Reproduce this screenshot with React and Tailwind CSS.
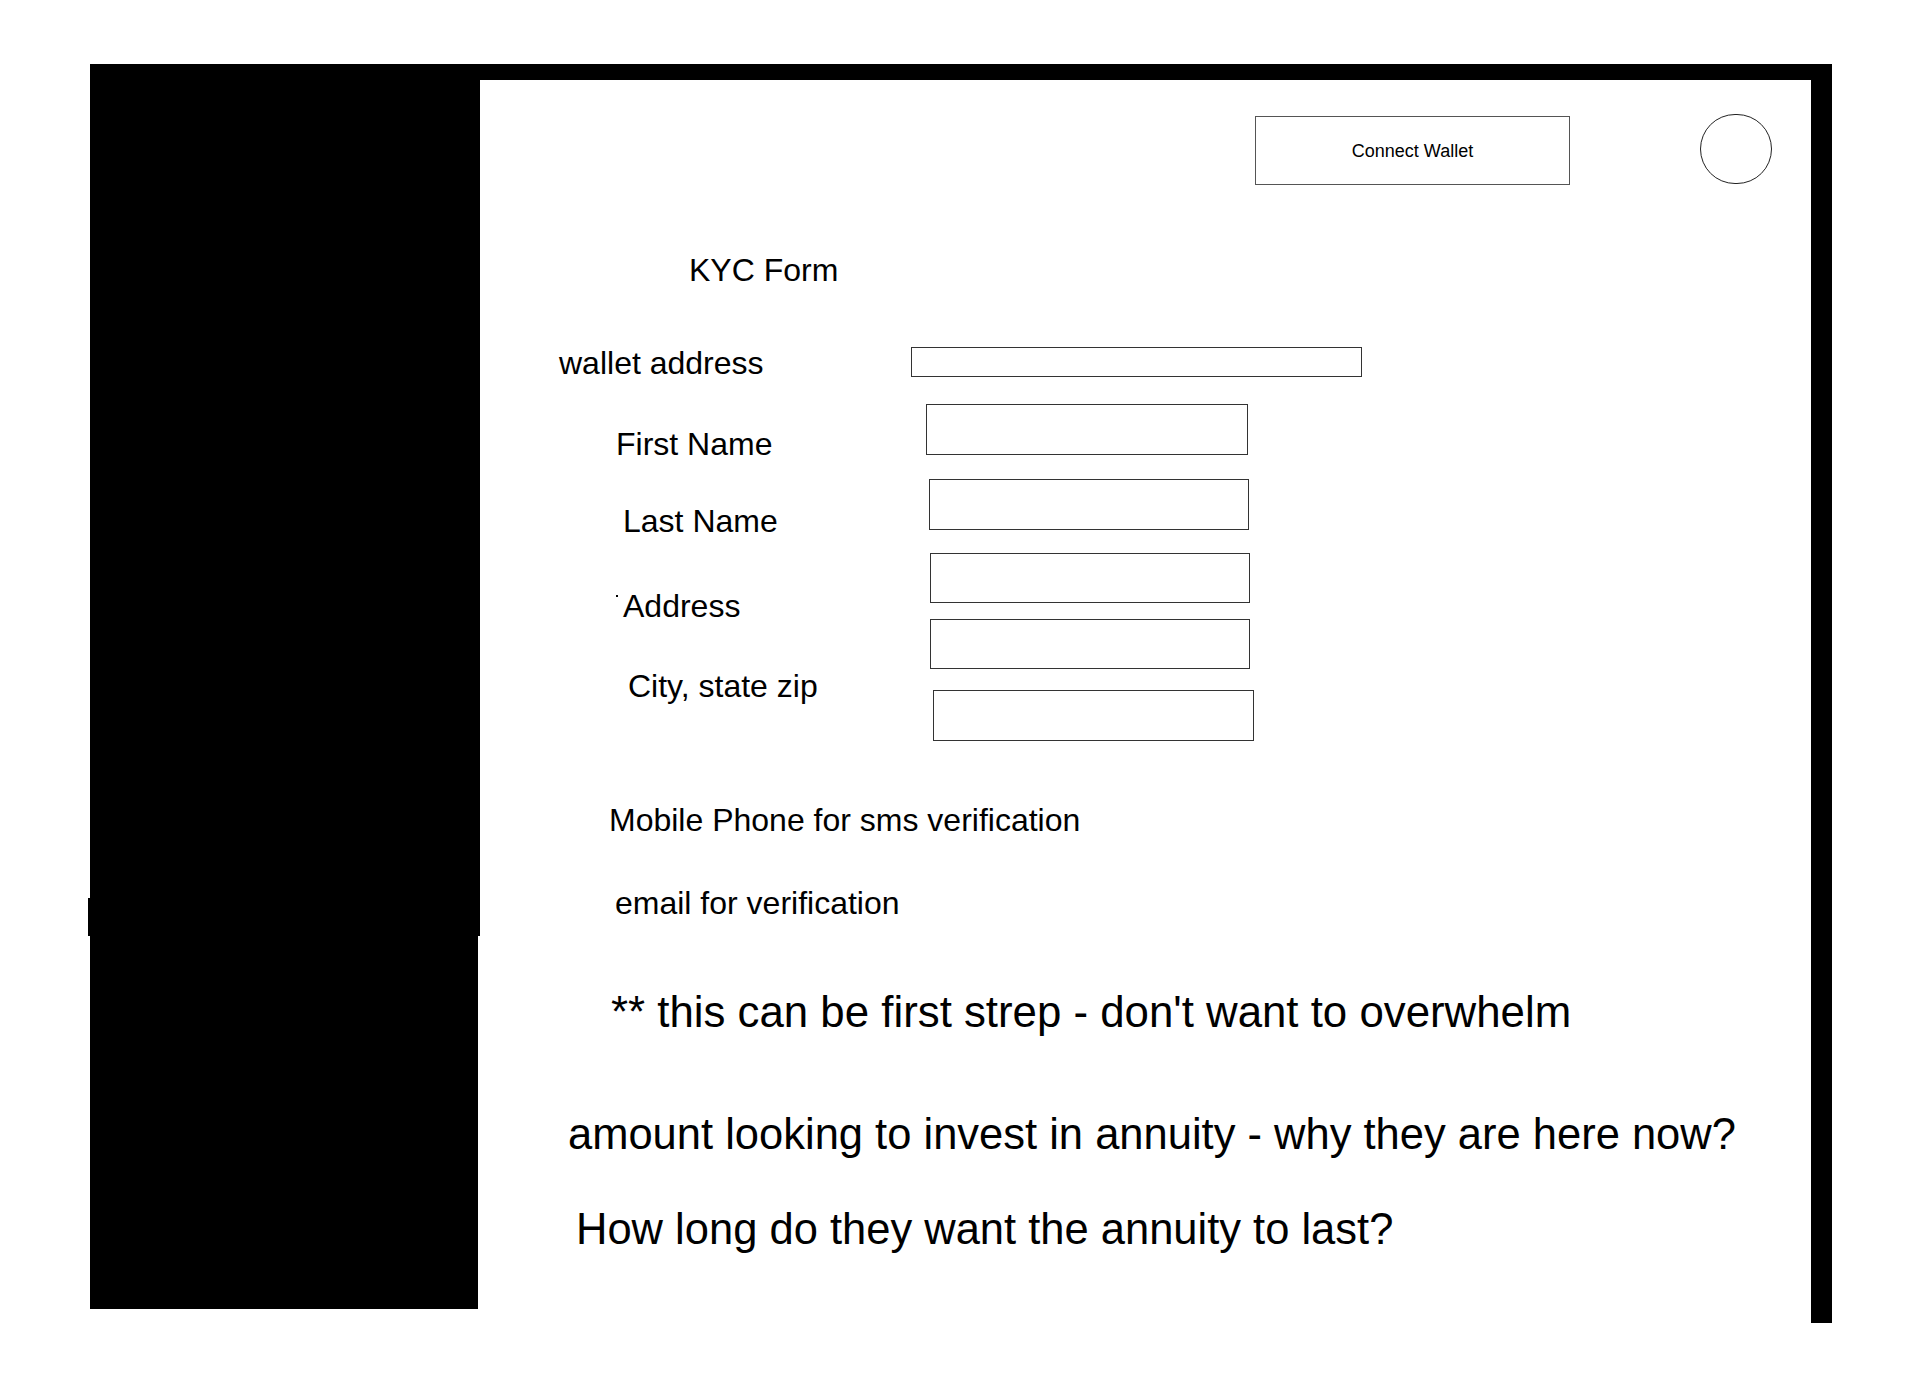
import React from 'react';

const labelCls = "block text-[32px] leading-none whitespace-nowrap";
const boxCls = "border border-[#333] bg-white";

function FieldLabels() {
  return (
    <div className="flex flex-col w-[420px] shrink-0">
      <span className={`${labelCls} ml-[79px]`}>wallet address</span>
      <span className={`${labelCls} ml-[136px] mt-[49px]`}>First Name</span>
      <span className={`${labelCls} ml-[143px] mt-[45px]`}>Last Name</span>
      <div className="flex items-start ml-[136px] mt-[53px]">
        <span className="w-[2px] h-[2px] bg-black mt-[5px] mr-[5px]" />
        <span className={labelCls}>Address</span>
      </div>
      <span className={`${labelCls} ml-[148px] mt-[48px]`}>City, state zip</span>
    </div>
  );
}

function FieldBoxes() {
  return (
    <div className="flex flex-col">
      <div className={`${boxCls} ml-[11px] w-[451px] h-[30px]`} />
      <div className={`${boxCls} ml-[26px] mt-[27px] w-[322px] h-[51px]`} />
      <div className={`${boxCls} ml-[29px] mt-[24px] w-[320px] h-[51px]`} />
      <div className={`${boxCls} ml-[30px] mt-[23px] w-[320px] h-[50px]`} />
      <div className={`${boxCls} ml-[30px] mt-[16px] w-[320px] h-[50px]`} />
      <div className={`${boxCls} ml-[33px] mt-[21px] w-[321px] h-[51px]`} />
    </div>
  );
}

export default function App() {
  return (
    <div className="w-[1920px] h-[1387px] bg-white text-black overflow-hidden font-['Liberation_Sans',Arial,sans-serif]">
      <div className="flex items-start pt-[64px] pl-[90px]">
        {/* left dark panel */}
        <div className="flex flex-col w-[392px] shrink-0">
          <div className="w-[390px] h-[834px] bg-black" />
          <div className="-ml-[2px] w-[392px] h-[38px] bg-black" />
          <div className="w-[388px] h-[373px] bg-black" />
        </div>

        {/* main canvas */}
        <div className="flex flex-col w-[1331px] shrink-0 -ml-[2px]">
          <div className="h-[16px] bg-black" />

          <div className="flex items-start pt-[34px] pl-[775px]">
            <button className="mt-[2px] w-[315px] h-[69px] border border-[#555] bg-white flex items-center justify-center text-[18px] leading-none">
              Connect Wallet
            </button>
            <div className="ml-[130px] w-[72px] h-[70px] rounded-full border border-[#222]" />
          </div>

          <h1 className="ml-[209px] mt-[69px] text-[32px] leading-none font-normal">KYC Form</h1>

          <div className="flex items-start mt-[61px]">
            <FieldLabels />
            <FieldBoxes />
          </div>

          <p className={`${labelCls} ml-[129px] mt-[63px]`}>Mobile Phone for sms verification</p>
          <p className={`${labelCls} ml-[135px] mt-[51px]`}>email for verification</p>

          <p className="ml-[131px] mt-[71px] text-[43.8px] leading-none whitespace-nowrap">
            ** this can be first strep - don't want to overwhelm
          </p>
          <p className="ml-[88px] mt-[79px] text-[43.5px] leading-none whitespace-nowrap">
            amount looking to invest in annuity - why they are here now?
          </p>
          <p className="ml-[96px] mt-[51.5px] text-[43.5px] leading-none whitespace-nowrap">
            How long do they want the annuity to last?
          </p>
        </div>

        {/* right edge bar */}
        <div className="w-[21px] h-[1259px] bg-black shrink-0" />
      </div>
    </div>
  );
}
